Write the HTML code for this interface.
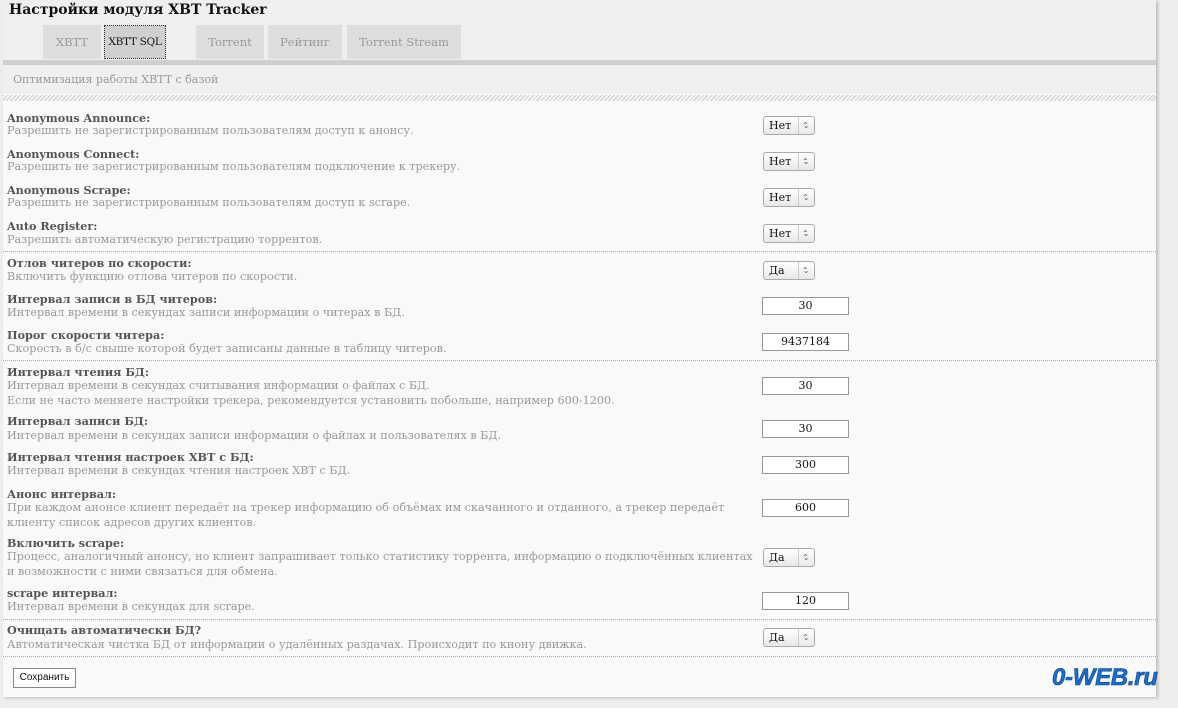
<!DOCTYPE html>
<html><head><meta charset="utf-8"><style>
body{margin:0;width:1178px;height:708px;background:#eeeeec;font-family:"DejaVu Serif","Liberation Serif",serif;position:relative;overflow:hidden}
#p{position:absolute;left:3px;top:0;width:1153px;height:697px;background:#f9f9f9;box-shadow:2px 1px 3px #bbb}
#hd{position:absolute;left:0;top:0;width:1153px;height:60px;background:#efefef}
h1{position:absolute;left:6px;top:2px;margin:0;font-size:14px;font-weight:bold;color:#111}
.tab{position:absolute;top:25px;height:34px;line-height:34px;background:#dedede;color:#999;font-size:11.5px;text-align:center;white-space:nowrap}
#bar{position:absolute;left:0;top:60px;width:1153px;height:5px;background:#cfcfcf}
#sub{position:absolute;left:0;top:65px;width:1153px;height:29px;background:#f0f0f0;font-size:11px;color:#999;line-height:29px;text-indent:10px}
#hatch{position:absolute;left:0;top:95px;width:1153px;height:6px;background:repeating-linear-gradient(135deg,#ccc 0 1px,#f5f5f5 1px 3px)}
.l{position:absolute;left:4px;font-size:11.2px;font-weight:bold;color:#555;line-height:14px;white-space:nowrap}
.d{position:absolute;left:4px;font-size:11.2px;color:#999;line-height:14.5px;white-space:nowrap}
.s{position:absolute;left:760px;width:50px;height:17px;border:1px solid #aaa;border-radius:3px;background:linear-gradient(#fff,#e8e8e8);font-size:11px;line-height:17px;text-indent:5px;color:#111;box-sizing:content-box}
.s:after{content:"⌃⌄";position:absolute;right:0;top:0;width:15px;border-left:1px solid #ccc;height:17px;font-size:8px;text-indent:3px;color:#555;letter-spacing:-6px;line-height:17px}
.i{position:absolute;left:759px;width:85px;height:16px;border:1px solid #999;background:#fff;font-size:11px;text-align:center;line-height:16px;color:#111}
.sep{position:absolute;left:0;width:1153px;border-top:1px dotted #aaa}
</style></head><body>
<div id="p">
<div id="hd"><h1>Настройки модуля XBT Tracker</h1>
<div class="tab" style="left:40px;width:58px">XBTT</div>
<div class="tab" style="left:101px;width:62px;background:#d0d0d0;color:#111;border:1px dotted #333;box-sizing:border-box;line-height:32px;font-size:10.5px;letter-spacing:-0.3px">XBTT SQL</div>
<div class="tab" style="left:193px;width:68px">Torrent</div>
<div class="tab" style="left:265px;width:74px">Рейтинг</div>
<div class="tab" style="left:344px;width:114px">Torrent Stream</div>
</div>
<div id="bar"></div>
<div id="sub">Оптимизация работы XBTT с базой</div>
<div id="hatch"></div>

<div class="l" style="top:111px">Anonymous Announce:</div><div class="d" style="top:124px">Разрешить не зарегистрированным пользователям доступ к анонсу.</div><div class="s" style="top:116px">Нет</div>
<div class="l" style="top:147px">Anonymous Connect:</div><div class="d" style="top:160px">Разрешить не зарегистрированным пользователям подключение к трекеру.</div><div class="s" style="top:152px">Нет</div>
<div class="l" style="top:183px">Anonymous Scrape:</div><div class="d" style="top:196px">Разрешить не зарегистрированным пользователям доступ к scrape.</div><div class="s" style="top:188px">Нет</div>
<div class="l" style="top:219px">Auto Register:</div><div class="d" style="top:233px">Разрешить автоматическую регистрацию торрентов.</div><div class="s" style="top:224px">Нет</div>
<div class="sep" style="top:251px"></div>
<div class="l" style="top:256px">Отлов читеров по скорости:</div><div class="d" style="top:270px">Включить функцию отлова читеров по скорости.</div><div class="s" style="top:261px">Да</div>
<div class="l" style="top:292px">Интервал записи в БД читеров:</div><div class="d" style="top:306px">Интервал времени в секундах записи информации о читерах в БД.</div><div class="i" style="top:297px">30</div>
<div class="l" style="top:328px">Порог скорости читера:</div><div class="d" style="top:342px">Скорость в б/с свыше которой будет записаны данные в таблицу читеров.</div><div class="i" style="top:333px">9437184</div>
<div class="sep" style="top:360px"></div>
<div class="l" style="top:365px">Интервал чтения БД:</div><div class="d" style="top:379px">Интервал времени в секундах считывания информации о файлах с БД.<br>Если не часто меняете настройки трекера, рекомендуется установить побольше, например 600-1200.</div><div class="i" style="top:377px">30</div>
<div class="l" style="top:414px">Интервал записи БД:</div><div class="d" style="top:429px">Интервал времени в секундах записи информации о файлах и пользователях в БД.</div><div class="i" style="top:420px">30</div>
<div class="l" style="top:450px">Интервал чтения настроек XBT с БД:</div><div class="d" style="top:464px">Интервал времени в секундах чтения настроек XBT с БД.</div><div class="i" style="top:456px">300</div>
<div class="l" style="top:487px">Анонс интервал:</div><div class="d" style="top:501px">При каждом анонсе клиент передаёт на трекер информацию об объёмах им скачанного и отданного, а трекер передаёт<br>клиенту список адресов других клиентов.</div><div class="i" style="top:499px">600</div>
<div class="l" style="top:536px">Включить scrape:</div><div class="d" style="top:550px">Процесс, аналогичный анонсу, но клиент запрашивает только статистику торрента, информацию о подключённых клиентах<br>и возможности с ними связаться для обмена.</div><div class="s" style="top:548px">Да</div>
<div class="l" style="top:586px">scrape интервал:</div><div class="d" style="top:600px">Интервал времени в секундах для scrape.</div><div class="i" style="top:592px">120</div>
<div class="sep" style="top:619px"></div>
<div class="l" style="top:623px">Очищать автоматически БД?</div><div class="d" style="top:638px">Автоматическая чистка БД от информации о удалённых раздачах. Происходит по кнону движка.</div><div class="s" style="top:628px">Да</div>
<div class="sep" style="top:656px"></div>
<div style="position:absolute;left:10px;top:668px;width:61px;height:18px;border:1px solid #888;background:#fff;font-family:'Liberation Sans',sans-serif;font-size:10px;line-height:18px;text-align:center;color:#111">Сохранить</div>
</div>
<div style="position:absolute;left:1052px;top:664px;font-family:'Liberation Sans',sans-serif;font-style:italic;font-weight:bold;font-size:24px;color:#1a6fd0;letter-spacing:-0.3px;-webkit-text-stroke:0.6px #0a3f8a">0-WEB.ru</div>
</body></html>
